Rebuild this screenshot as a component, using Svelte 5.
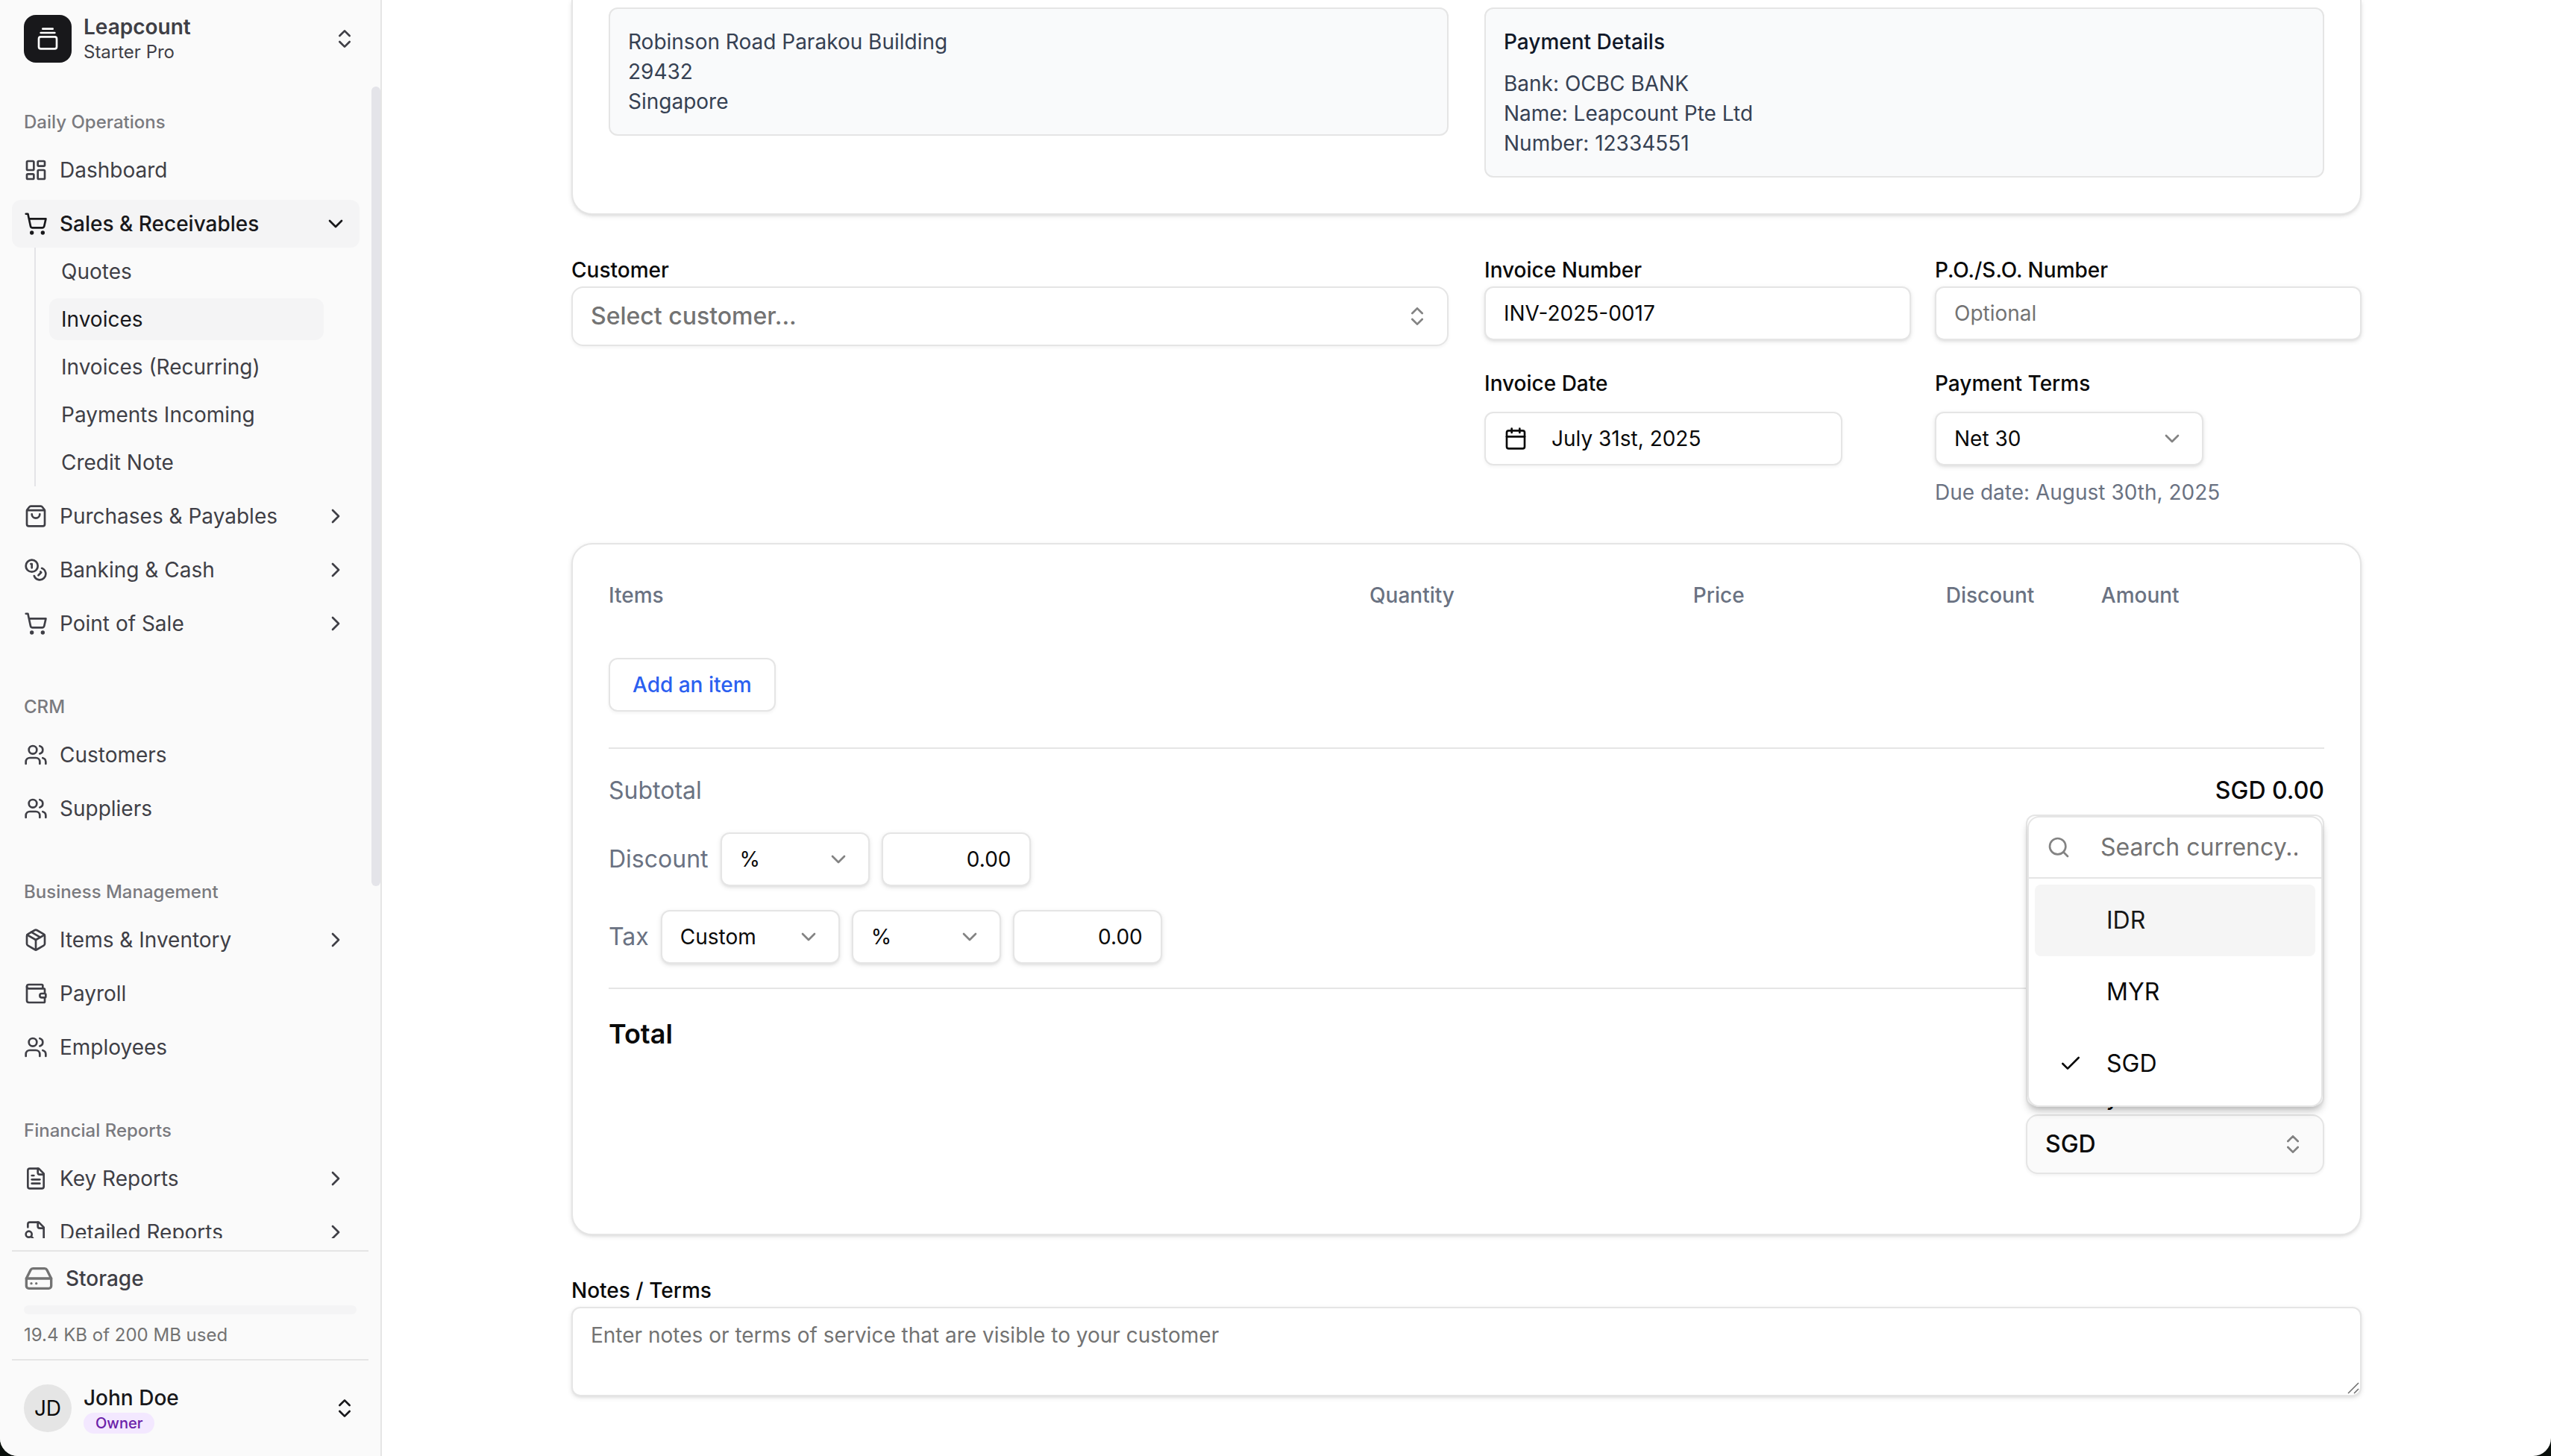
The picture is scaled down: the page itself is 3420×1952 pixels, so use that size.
<script lang="ts">
  type NavItem = {
    label: string;
    icon: string;
    expandable?: boolean;
    open?: boolean;
    children?: string[];
  };

  type NavGroup = {
    title: string;
    items: NavItem[];
  };

  // Inner markup of the 24x24 stroke icons
  const icons: Record<string, string> = {
    logo: '<path d="M7 2h10"/><path d="M5 6h14"/><rect width="18" height="12" x="3" y="10" rx="2"/>',
    dashboard:
      '<rect width="7" height="9" x="3" y="3" rx="1"/><rect width="7" height="5" x="14" y="3" rx="1"/><rect width="7" height="9" x="14" y="12" rx="1"/><rect width="7" height="5" x="3" y="16" rx="1"/>',
    cart: '<circle cx="8" cy="21" r="1"/><circle cx="19" cy="21" r="1"/><path d="M2.05 2.05h2l2.66 12.42a2 2 0 0 0 2 1.58h9.78a2 2 0 0 0 1.95-1.57l1.65-7.43H5.12"/>',
    bag: '<path d="M16 10a4 4 0 0 1-8 0"/><path d="M3.103 6.034h17.794"/><path d="M3.4 5.467a2 2 0 0 0-.4 1.2V20a2 2 0 0 0 2 2h14a2 2 0 0 0 2-2V6.667a2 2 0 0 0-.4-1.2l-2-2.667A2 2 0 0 0 17 2H7a2 2 0 0 0-1.6.8z"/>',
    coins:
      '<circle cx="8" cy="8" r="6"/><path d="M18.09 10.37A6 6 0 1 1 10.34 18"/><path d="M7 6h1v4"/><path d="m16.71 13.88.7.71-2.82 2.82"/>',
    users:
      '<path d="M16 21v-2a4 4 0 0 0-4-4H6a4 4 0 0 0-4 4v2"/><path d="M16 3.128a4 4 0 0 1 0 7.744"/><path d="M22 21v-2a4 4 0 0 0-3-3.87"/><circle cx="9" cy="7" r="4"/>',
    box: '<path d="M11 21.73a2 2 0 0 0 2 0l7-4A2 2 0 0 0 21 16V8a2 2 0 0 0-1-1.73l-7-4a2 2 0 0 0-2 0l-7 4A2 2 0 0 0 3 8v8a2 2 0 0 0 1 1.73z"/><path d="M12 22V12"/><path d="M3.29 7 12 12l8.71-5"/><path d="m7.5 4.27 9 5.15"/>',
    wallet:
      '<path d="M19 7V4a1 1 0 0 0-1-1H5a2 2 0 0 0 0 4h15a1 1 0 0 1 1 1v4h-3a2 2 0 0 0 0 4h3a1 1 0 0 0 1-1v-2a1 1 0 0 0-1-1"/><path d="M3 5v14a2 2 0 0 0 2 2h15a1 1 0 0 0 1-1v-4"/>',
    file: '<path d="M15 2H6a2 2 0 0 0-2 2v16a2 2 0 0 0 2 2h12a2 2 0 0 0 2-2V7Z"/><path d="M14 2v4a2 2 0 0 0 2 2h4"/><path d="M10 9H8"/><path d="M16 13H8"/><path d="M16 17H8"/>',
    fileSearch:
      '<path d="M14 2v4a2 2 0 0 0 2 2h4"/><path d="M4.268 21a2 2 0 0 0 1.727 1H18a2 2 0 0 0 2-2V7l-5-5H6a2 2 0 0 0-2 2v3"/><path d="m9 18-1.5-1.5"/><circle cx="5" cy="14" r="3"/>',
    drive:
      '<path d="M22 12H2"/><path d="M5.45 5.11 2 12v6a2 2 0 0 0 2 2h16a2 2 0 0 0 2-2v-6l-3.45-6.89A2 2 0 0 0 16.76 4H7.24a2 2 0 0 0-1.79 1.11z"/><path d="M6 16h.01"/><path d="M10 16h.01"/>',
    calendar:
      '<path d="M8 2v4"/><path d="M16 2v4"/><rect width="18" height="18" x="3" y="4" rx="2"/><path d="M3 10h18"/>',
    search: '<circle cx="11" cy="11" r="8"/><path d="m21 21-4.3-4.3"/>',
    check: '<path d="M20 6 9 17l-5-5"/>',
    chevronDown: '<path d="m6 9 6 6 6-6"/>',
    chevronRight: '<path d="m9 18 6-6-6-6"/>',
    chevronsUpDown: '<path d="m7 15 5 5 5-5"/><path d="m7 9 5-5 5 5"/>',
  };

  const groups: NavGroup[] = [
    {
      title: "Daily Operations",
      items: [
        { label: "Dashboard", icon: "dashboard" },
        {
          label: "Sales & Receivables",
          icon: "cart",
          expandable: true,
          open: true,
          children: ["Quotes", "Invoices", "Invoices (Recurring)", "Payments Incoming", "Credit Note"],
        },
        { label: "Purchases & Payables", icon: "bag", expandable: true },
        { label: "Banking & Cash", icon: "coins", expandable: true },
        { label: "Point of Sale", icon: "cart", expandable: true },
      ],
    },
    {
      title: "CRM",
      items: [
        { label: "Customers", icon: "users" },
        { label: "Suppliers", icon: "users" },
      ],
    },
    {
      title: "Business Management",
      items: [
        { label: "Items & Inventory", icon: "box", expandable: true },
        { label: "Payroll", icon: "wallet" },
        { label: "Employees", icon: "users" },
      ],
    },
    {
      title: "Financial Reports",
      items: [
        { label: "Key Reports", icon: "file", expandable: true },
        { label: "Detailed Reports", icon: "fileSearch", expandable: true },
      ],
    },
  ];

  const currencies = ["IDR", "MYR", "SGD"];

  let currentPage = $state("Invoices");
  let currency = $state("SGD");
  let highlighted = $state("IDR");
  let currencyOpen = $state(true);
  let invoiceNumber = $state("INV-2025-0017");
  let discount = $state("0.00");
  let tax = $state("0.00");

  function pickCurrency(code: string) {
    currency = code;
    currencyOpen = false;
  }
</script>

{#snippet icon(name: string, extra = "")}
  <svg
    class="icon {extra}"
    viewBox="0 0 24 24"
    fill="none"
    stroke="currentColor"
    stroke-width="2"
    stroke-linecap="round"
    stroke-linejoin="round"
    aria-hidden="true"
  >
    {@html icons[name]}
  </svg>
{/snippet}

{#snippet dropdown(id: string, label: string, size: string, options: string[])}
  <div class="select {size}">
    <select {id} aria-label={label}>
      {#each options as option}
        <option>{option}</option>
      {/each}
    </select>
    {@render icon("chevronDown", "faded")}
  </div>
{/snippet}

<div class="app">
  <aside class="sidebar">
    <button class="account team">
      <span class="logo">{@render icon("logo")}</span>
      <span class="account-text">
        <span class="team-name">Leapcount</span>
        <span class="plan">Starter Pro</span>
      </span>
      {@render icon("chevronsUpDown")}
    </button>

    <div class="nav-area">
      <nav class="nav" aria-label="Main">
        {#each groups as group}
          <section class="group">
            <h2 class="group-title">{group.title}</h2>
            <ul class="menu">
              {#each group.items as item}
                <li>
                  <a href="#{item.icon}" class="menu-item" class:open={item.open}>
                    {@render icon(item.icon)}
                    <span class="menu-label">{item.label}</span>
                    {#if item.expandable}
                      {@render icon(item.open ? "chevronDown" : "chevronRight")}
                    {/if}
                  </a>
                  {#if item.children}
                    <ul class="submenu">
                      {#each item.children as child}
                        <li>
                          <a
                            href="#sales"
                            class="submenu-item"
                            class:active={child === currentPage}
                            aria-current={child === currentPage ? "page" : undefined}
                            onclick={() => (currentPage = child)}
                          >
                            {child}
                          </a>
                        </li>
                      {/each}
                    </ul>
                  {/if}
                </li>
              {/each}
            </ul>
          </section>
        {/each}
      </nav>
      <div class="scroll-thumb"></div>
    </div>

    <div class="sidebar-footer">
      <div class="storage">
        <div class="storage-title">
          {@render icon("drive", "large")}
          <span>Storage</span>
        </div>
        <div class="storage-bar"></div>
        <p class="storage-used">19.4 KB of 200 MB used</p>
      </div>
      <button class="account user">
        <span class="avatar">JD</span>
        <span class="account-text">
          <span class="user-name">John Doe</span>
          <span class="badge">Owner</span>
        </span>
        {@render icon("chevronsUpDown")}
      </button>
    </div>
  </aside>

  <main class="main">
    <div class="content">
      <section class="card company">
        <div class="info-box">
          <p>Robinson Road Parakou Building</p>
          <p>29432</p>
          <p>Singapore</p>
        </div>
        <div class="info-box">
          <h3>Payment Details</h3>
          <p>Bank: OCBC BANK</p>
          <p>Name: Leapcount Pte Ltd</p>
          <p>Number: 12334551</p>
        </div>
      </section>

      <section class="details">
        <div class="field">
          <label for="customer">Customer</label>
          <button id="customer" class="combobox placeholder" role="combobox" aria-expanded="false" aria-controls="customer-list">
            <span>Select customer...</span>
            {@render icon("chevronsUpDown", "faded")}
          </button>
        </div>

        <div class="fields">
          <div class="field">
            <label for="invoice-number">Invoice Number</label>
            <input id="invoice-number" class="input" type="text" bind:value={invoiceNumber} />
          </div>
          <div class="field">
            <label for="po-number">P.O./S.O. Number</label>
            <input id="po-number" class="input" type="text" placeholder="Optional" />
          </div>
          <div class="field spaced">
            <label for="invoice-date">Invoice Date</label>
            <button id="invoice-date" class="date-button">
              {@render icon("calendar")}
              <span>July 31st, 2025</span>
            </button>
          </div>
          <div class="field spaced">
            <label for="payment-terms">Payment Terms</label>
            {@render dropdown("payment-terms", "Payment Terms", "terms", ["Net 30", "Net 15", "Net 60"])}
            <p class="due">Due date: August 30th, 2025</p>
          </div>
        </div>
      </section>

      <section class="card items">
        <table class="items-table">
          <thead>
            <tr>
              <th class="name">Items</th>
              <th>Quantity</th>
              <th>Price</th>
              <th>Discount</th>
              <th class="amount">Amount</th>
            </tr>
          </thead>
        </table>

        <button class="add-button">Add an item</button>

        <div class="totals">
          <div class="row between">
            <span class="muted">Subtotal</span>
            <span class="value">SGD 0.00</span>
          </div>
          <div class="row">
            <label class="muted" for="discount">Discount</label>
            {@render dropdown("discount-type", "Discount type", "unit", ["%", "SGD"])}
            <input id="discount" class="input number" type="text" bind:value={discount} />
          </div>
          <div class="row">
            <label class="muted" for="tax">Tax</label>
            {@render dropdown("tax-kind", "Tax kind", "kind", ["Custom", "GST"])}
            {@render dropdown("tax-type", "Tax type", "unit", ["%", "SGD"])}
            <input id="tax" class="input number" type="text" bind:value={tax} />
          </div>
        </div>

        <div class="totals grand">
          <div class="row between">
            <span class="total-label">Total</span>
            <span class="total-label">SGD 0.00</span>
          </div>
          <div class="field currency">
            <label for="currency">Currency</label>
            <button
              id="currency"
              class="combobox"
              class:expanded={currencyOpen}
              role="combobox"
              aria-expanded={currencyOpen}
              aria-controls="currency-list"
              onclick={() => (currencyOpen = !currencyOpen)}
            >
              <span>{currency}</span>
              {@render icon("chevronsUpDown", "faded")}
            </button>

            {#if currencyOpen}
              <div class="popover">
                <div class="command">
                  <div class="search">
                    {@render icon("search", "faded")}
                    <input type="text" placeholder="Search currency..." aria-label="Search currency" />
                  </div>
                  <div class="options" id="currency-list" role="listbox" aria-label="Currency">
                    {#each currencies as code}
                      <button
                        class="option"
                        class:highlighted={code === highlighted}
                        role="option"
                        aria-selected={code === currency}
                        onmouseenter={() => (highlighted = code)}
                        onclick={() => pickCurrency(code)}
                      >
                        {@render icon("check", code === currency ? "" : "hidden")}
                        <span>{code}</span>
                      </button>
                    {/each}
                  </div>
                </div>
              </div>
            {/if}
          </div>
        </div>
      </section>

      <div class="field notes">
        <label for="notes">Notes / Terms</label>
        <textarea id="notes" placeholder="Enter notes or terms of service that are visible to your customer"></textarea>
        <svg class="grip" viewBox="0 0 16 16" stroke="#6b6b6b" stroke-width="1.5" aria-hidden="true">
          <path d="M1 15 15 1M9 15l6-6" />
        </svg>
      </div>
    </div>
  </main>
</div>

<style>
  :global(body) {
    background: #0a100c;
  }

  .app {
    display: flex;
    height: 100vh;
    overflow: hidden;
    border-radius: 0 0 24px 24px;
    background: #fff;
    color: #0a0a0a;
    font-family: Inter, "Liberation Sans", sans-serif;
    font-size: 32px;
    line-height: 48px;
  }

  .app * {
    box-sizing: border-box;
  }

  h2,
  h3,
  p,
  ul {
    margin: 0;
    padding: 0;
    font-weight: 400;
    list-style: none;
  }

  button,
  input,
  select,
  textarea {
    margin: 0;
    font: inherit;
    color: inherit;
  }

  button {
    text-align: left;
    cursor: pointer;
  }

  .icon {
    flex: none;
    width: 32px;
    height: 32px;
  }

  .icon.large {
    width: 40px;
    height: 40px;
  }

  .icon.faded {
    color: #0a0a0a;
    opacity: 0.5;
  }

  .icon.hidden {
    visibility: hidden;
  }

  /* Sidebar */
  .sidebar {
    display: flex;
    flex: none;
    flex-direction: column;
    width: 512px;
    border-right: 2px solid #e5e5e5;
    background: #fafafa;
    color: #3f3f46;
    font-size: 28px;
    line-height: 40px;
  }

  .account {
    display: flex;
    align-items: center;
    gap: 16px;
    width: 100%;
    border: 0;
    background: none;
  }

  .team {
    height: 116px;
    padding: 0 32px 12px;
  }

  .user {
    height: 128px;
    padding: 0 32px;
    color: #18181b;
  }

  .logo,
  .avatar {
    display: flex;
    flex: none;
    align-items: center;
    justify-content: center;
    width: 64px;
    height: 64px;
  }

  .logo {
    border-radius: 16px;
    background: #18181b;
    color: #fff;
  }

  .avatar {
    border-radius: 50%;
    background: #e5e5e5;
    color: #0a0a0a;
  }

  .account-text {
    display: flex;
    flex: 1;
    flex-direction: column;
    align-items: flex-start;
  }

  .team-name {
    font-weight: 600;
    line-height: 36px;
  }

  .plan {
    font-size: 24px;
    line-height: 32px;
  }

  .user-name {
    font-weight: 500;
  }

  .badge {
    padding: 0 16px;
    border-radius: 14px;
    background: #f3e8ff;
    color: #6b21a8;
    font-size: 20px;
    font-weight: 500;
    line-height: 28px;
  }

  .nav-area {
    position: relative;
    flex: 1;
    min-height: 0;
  }

  .nav {
    display: flex;
    flex-direction: column;
    gap: 16px;
    height: 100%;
    padding-right: 12px;
    overflow: hidden;
  }

  .scroll-thumb {
    position: absolute;
    top: 0;
    right: 0;
    width: 12px;
    height: 1072px;
    border-radius: 6px;
    background: #e4e4e9;
  }

  .group {
    padding: 16px;
  }

  .group-title {
    padding: 0 16px;
    color: #7a7a7f;
    font-size: 24px;
    font-weight: 500;
    line-height: 64px;
  }

  .menu {
    display: flex;
    flex-direction: column;
    gap: 8px;
  }

  .menu-item {
    display: flex;
    align-items: center;
    gap: 16px;
    height: 64px;
    padding: 0 16px;
    border-radius: 12px;
    color: inherit;
    text-decoration: none;
  }

  .menu-item.open {
    background: #f4f4f5;
    color: #18181b;
    font-weight: 500;
  }

  .menu-label {
    flex: 1;
    white-space: nowrap;
  }

  .submenu {
    display: flex;
    flex-direction: column;
    gap: 8px;
    margin: 0 48px 0 30px;
    padding: 4px 0 4px 18px;
    border-left: 2px solid #e4e4e7;
  }

  .submenu-item {
    display: flex;
    align-items: center;
    height: 56px;
    padding: 0 16px;
    border-radius: 12px;
    color: inherit;
    text-decoration: none;
    white-space: nowrap;
  }

  .submenu-item.active {
    background: #f4f4f5;
    color: #18181b;
  }

  .sidebar-footer {
    padding-top: 16px;
  }

  .storage {
    margin: 0 16px;
    padding: 16px;
    border-top: 2px solid #e5e5e5;
    border-bottom: 2px solid #e5e5e5;
  }

  .storage-title {
    display: flex;
    align-items: center;
    gap: 16px;
    font-weight: 500;
  }

  .storage-title :global(.icon) {
    color: #737373;
  }

  .storage-bar {
    height: 12px;
    margin: 16px 0 12px;
    border-radius: 6px;
    background: #f4f4f5;
  }

  .storage-used {
    color: #737373;
    font-size: 24px;
    line-height: 32px;
  }

  /* Invoice form */
  .main {
    flex: 1;
    min-width: 0;
    overflow: hidden;
  }

  .content {
    display: flex;
    flex-direction: column;
    gap: 48px;
    max-width: 2400px;
    margin: 0 auto;
  }

  .card {
    border: 2px solid #e5e5e5;
    border-radius: 28px;
    background: #fff;
    box-shadow:
      0 2px 6px rgba(0, 0, 0, 0.1),
      0 2px 4px -2px rgba(0, 0, 0, 0.1);
  }

  .company {
    display: grid;
    grid-template-columns: 1fr 1fr;
    align-items: start;
    gap: 48px;
    padding: 10px 48px 48px;
    border-top: 0;
    border-radius: 0 0 28px 28px;
  }

  .info-box {
    padding: 24px;
    border: 2px solid #e5e5e5;
    border-radius: 12px;
    background: #f9fafb;
    color: #364153;
    font-size: 28px;
    line-height: 40px;
  }

  .info-box h3 {
    margin-bottom: 16px;
    color: #101828;
    font-size: 28px;
    font-weight: 500;
  }

  .details {
    display: grid;
    grid-template-columns: 1fr 1fr;
    gap: 48px;
  }

  .fields {
    display: grid;
    grid-template-columns: 1fr 1fr;
    gap: 32px;
  }

  .field label {
    display: block;
    padding-top: 4px;
    font-size: 28px;
    font-weight: 500;
    line-height: 44px;
  }

  .field.spaced label {
    margin-bottom: 16px;
  }

  .input,
  .select select,
  .date-button,
  .add-button,
  .combobox,
  textarea {
    display: block;
    border: 2px solid #e5e5e5;
    border-radius: 12px;
    background: #fff;
    font-size: 28px;
    line-height: 40px;
    outline: none;
  }

  .input,
  .select select {
    width: 100%;
    height: 72px;
    padding: 0 24px;
    box-shadow:
      0 2px 6px rgba(0, 0, 0, 0.1),
      0 2px 4px -2px rgba(0, 0, 0, 0.1);
  }

  .input::placeholder,
  textarea::placeholder,
  .search input::placeholder {
    color: #737373;
    opacity: 1;
  }

  .select {
    position: relative;
    flex: none;
  }

  .select select {
    appearance: none;
  }

  .select :global(.icon) {
    position: absolute;
    top: 20px;
    right: 26px;
    pointer-events: none;
  }

  .terms {
    width: 360px;
  }

  .unit {
    width: 200px;
  }

  .kind {
    width: 240px;
  }

  .input.number {
    width: 200px;
    text-align: right;
  }

  .date-button,
  .add-button,
  .combobox {
    box-shadow: 0 2px 4px rgba(0, 0, 0, 0.05);
  }

  .date-button {
    display: flex;
    align-items: center;
    gap: 32px;
    width: 480px;
    height: 72px;
    padding: 0 24px;
  }

  .due {
    margin-top: 16px;
    color: #6a7282;
    font-size: 28px;
    line-height: 40px;
  }

  .combobox {
    display: flex;
    align-items: center;
    justify-content: space-between;
    width: 100%;
    height: 80px;
    padding: 0 24px;
    border-radius: 16px;
    font-size: 32px;
    font-weight: 500;
  }

  .combobox.placeholder {
    color: #737373;
  }

  .combobox.expanded {
    background: #fafafa;
  }

  .items {
    padding: 48px 48px 80px;
  }

  .items-table {
    display: block;
  }

  .items-table thead {
    display: block;
  }

  .items-table tr {
    display: grid;
    grid-template-columns: repeat(12, 1fr);
    column-gap: 32px;
  }

  .items-table th {
    grid-column: span 2;
    padding: 0;
    color: #6a7282;
    font-size: 28px;
    font-weight: 500;
    line-height: 40px;
    text-align: right;
  }

  .items-table .name {
    grid-column: span 4;
    text-align: left;
  }

  .items-table .amount {
    grid-column: span 1;
  }

  .add-button {
    height: 72px;
    margin: 64px 0 48px;
    padding: 0 30px;
    color: #2b5ff0;
    font-weight: 500;
  }

  .totals {
    display: flex;
    flex-direction: column;
    gap: 32px;
    padding: 32px 0;
    border-top: 2px solid #e5e5e5;
  }

  .totals.grand {
    padding-bottom: 0;
  }

  .row {
    display: flex;
    align-items: center;
    gap: 16px;
  }

  .between {
    justify-content: space-between;
  }

  .muted {
    color: #6a7282;
  }

  .value {
    font-weight: 500;
  }

  .total-label {
    font-size: 36px;
    font-weight: 600;
    line-height: 56px;
  }

  .currency {
    position: relative;
    align-self: flex-end;
    width: 400px;
  }

  .popover {
    position: absolute;
    right: 0;
    bottom: 90px;
    width: 100%;
    border: 2px solid #e5e5e5;
    border-radius: 12px;
    background: #fff;
    box-shadow:
      0 8px 12px -2px rgba(0, 0, 0, 0.1),
      0 4px 8px -4px rgba(0, 0, 0, 0.1);
  }

  .command {
    margin-bottom: -2px;
    overflow: hidden;
    border: 2px solid #e5e5e5;
    border-radius: 16px;
    box-shadow:
      0 8px 12px -2px rgba(0, 0, 0, 0.1),
      0 4px 8px -4px rgba(0, 0, 0, 0.1);
  }

  .search {
    display: flex;
    align-items: center;
    gap: 40px;
    height: 82px;
    padding: 0 32px 0 24px;
    border-bottom: 2px solid #e5e5e5;
  }

  .search input {
    flex: 1;
    min-width: 0;
    padding: 0;
    border: 0;
    background: none;
    outline: none;
  }

  .options {
    padding: 8px;
  }

  .option {
    display: flex;
    align-items: center;
    gap: 32px;
    width: 100%;
    height: 96px;
    padding: 0 32px;
    border: 0;
    border-radius: 8px;
    background: none;
  }

  .option.highlighted {
    background: #f5f5f5;
    color: #171717;
  }

  .notes {
    position: relative;
  }

  textarea {
    width: 100%;
    height: 120px;
    padding: 16px 24px;
    box-shadow:
      0 2px 6px rgba(0, 0, 0, 0.1),
      0 2px 4px -2px rgba(0, 0, 0, 0.1);
    resize: none;
  }

  .grip {
    position: absolute;
    right: 3px;
    bottom: 3px;
    width: 16px;
    height: 16px;
  }
</style>
